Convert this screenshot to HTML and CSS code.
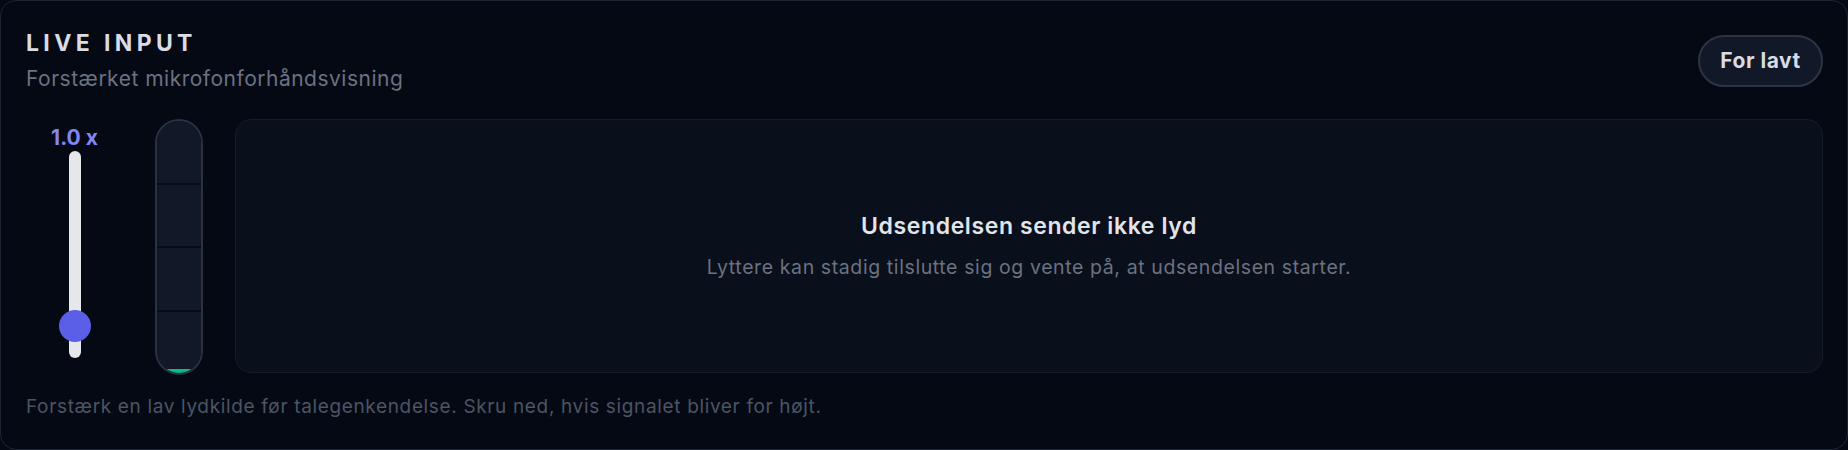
FILE: index.html
```html
<!DOCTYPE html>
<html lang="da">
<head>
  <meta charset="UTF-8">
  <meta name="viewport" content="width=device-width, initial-scale=1.0">
  <title>Live input</title>
  <link rel="stylesheet" href="styles.css">
</head>
<body>

  <section class="card">
    <header class="card-head">
      <div class="head-text">
        <h1 class="title">LIVE INPUT</h1>
        <p class="subtitle">Forstærket mikrofonforhåndsvisning</p>
      </div>
      <button class="level-btn">For lavt</button>
    </header>

    <div class="card-body">
      <div class="gain">
        <div class="gain-value">1.0 x</div>
        <div class="gain-track">
          <div class="gain-thumb"></div>
        </div>
      </div>

      <div class="meter">
        <div class="meter-seg"></div>
        <div class="meter-seg"></div>
        <div class="meter-seg"></div>
        <div class="meter-seg"></div>
        <div class="meter-fill"></div>
      </div>

      <div class="preview">
        <h2 class="preview-title">Udsendelsen sender ikke lyd</h2>
        <p class="preview-text">Lyttere kan stadig tilslutte sig og vente på, at udsendelsen starter.</p>
      </div>
    </div>

    <p class="hint">Forstærk en lav lydkilde før talegenkendelse. Skru ned, hvis signalet bliver for højt.</p>
  </section>

</body>
</html>
```

FILE: styles.css
```css
:root {
  --bg: #050914;
  --panel: #0a0f1c;
  --line: #1e2533;
  --text: #e5e7eb;
  --muted: #6b7280;
  --dim: #4b5563;
  --accent: #5b5fe8;
}

* {
  box-sizing: border-box;
}

body {
  margin: 0;
  background: var(--bg);
  font-family: Inter, "Noto Sans", sans-serif;
  color: var(--text);
}

.card {
  height: 450px;
  border: 1px solid var(--line);
  border-radius: 16px;
  background: var(--bg);
  padding: 28px 24px 0 25px;
  display: flex;
  flex-direction: column;
}

.card-head {
  display: flex;
  justify-content: space-between;
  align-items: center;
}

.title {
  margin: 0;
  font-size: 23px;
  line-height: 28px;
  font-weight: 700;
  letter-spacing: 0.19em;
  color: #d9dce3;
}

.subtitle {
  margin: 9px 0 0;
  font-size: 21px;
  line-height: 26px;
  letter-spacing: 0.5px;
  color: var(--muted);
}

.level-btn {
  height: 52px;
  width: 125px;
  border: 2px solid #2c3444;
  border-radius: 26px;
  background: #111827;
  color: #d9dce3;
  font-family: inherit;
  font-size: 21px;
  font-weight: 700;
  letter-spacing: 0.5px;
  cursor: pointer;
}

.card-body {
  margin-top: 27px;
  display: flex;
  gap: 32px;
  align-items: flex-start;
}

.gain {
  width: 97px;
  height: 256px;
  display: flex;
  flex-direction: column;
  align-items: center;
}

.gain-value {
  margin-top: 6px;
  font-size: 21px;
  line-height: 25px;
  font-weight: 700;
  color: #8187f3;
}

.gain-track {
  position: relative;
  margin-top: 1px;
  width: 12px;
  height: 207px;
  border-radius: 6px;
  background: #e6e7eb;
}

.gain-thumb {
  position: absolute;
  top: 159px;
  left: -10px;
  width: 32px;
  height: 32px;
  border-radius: 50%;
  background: var(--accent);
}

.meter {
  position: relative;
  width: 48px;
  height: 256px;
  border: 2px solid #2a3241;
  border-radius: 24px;
  background: #070b14;
  overflow: hidden;
  display: flex;
  flex-direction: column;
  gap: 2px;
}

.meter-seg {
  flex: 1;
  background: #111827;
}

.meter-fill {
  position: absolute;
  left: 0;
  right: 0;
  bottom: 0;
  height: 4px;
  background: #10b981;
}

.preview {
  flex: 1;
  height: 254px;
  border: 1px solid #151b29;
  border-radius: 16px;
  background: var(--panel);
  display: flex;
  flex-direction: column;
  align-items: center;
  justify-content: center;
  padding-bottom: 0;
}

.preview-title {
  margin: 0;
  font-size: 23px;
  line-height: 27px;
  font-weight: 600;
  letter-spacing: 0.6px;
  color: #e2e4e9;
}

.preview-text {
  margin: 16px 0 0;
  font-size: 19.5px;
  line-height: 23px;
  letter-spacing: 0.6px;
  color: var(--muted);
}

.hint {
  margin: 21px 0 0;
  font-size: 19px;
  line-height: 22px;
  letter-spacing: 0.65px;
  color: var(--dim);
}
```
